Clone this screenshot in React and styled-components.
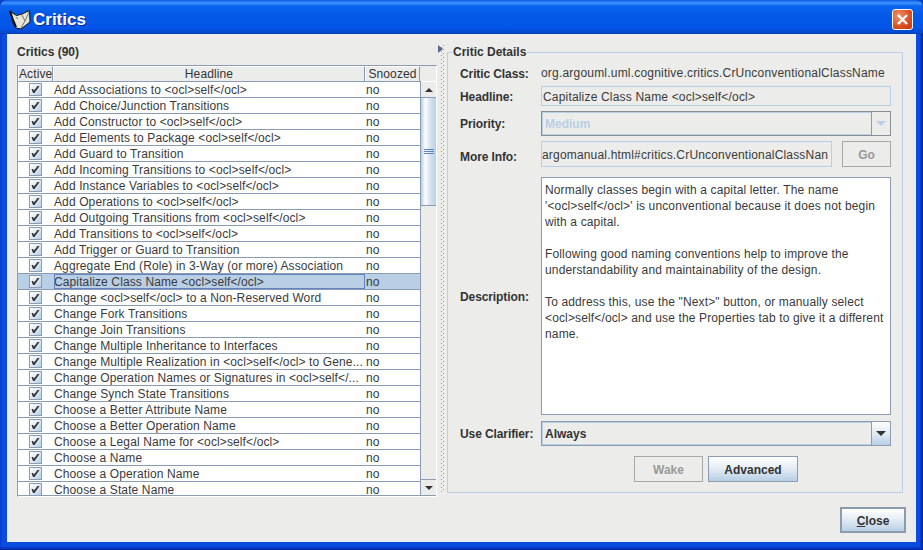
import React from 'react';
import styled, { createGlobalStyle } from 'styled-components';

const GlobalStyle = createGlobalStyle`
  html, body {
    margin: 0;
    padding: 0;
    background: #0a3cc4;
  }
  * {
    box-sizing: border-box;
  }
`;

const FONT = '"Liberation Sans", Arial, sans-serif';

const Frame = styled.div`
  width: 923px;
  height: 550px;
  display: flex;
  flex-direction: column;
  overflow: hidden;
  font-family: ${FONT};
  font-size: 12px;
  color: #333;
  background: #0a4ce0;
  box-shadow: inset -1px -1px 0 #00209c, inset -3px -3px 0 #0838c8, inset 2px 0 0 #0a40d0;
  border-radius: 7px 7px 0 0;
`;

const TitleBar = styled.div`
  height: 34px;
  flex: none;
  display: flex;
  align-items: center;
  padding: 5px 10px 0 9px;
  gap: 2px;
  background: linear-gradient(180deg, #0a5ae0 0, #3d95ff 3px, #0a64ee 6px, #0358e6 16px, #0454ea 28px, #0246c8 33px, #0238a8 34px);
`;

const Title = styled.span`
  color: #fff;
  font-size: 17px;
  font-weight: 700;
  text-shadow: 1px 1px 0 #0a2a90;
  flex: 1;
  padding-top: 1px;
`;

const CloseBox = styled.div`
  width: 21px;
  height: 21px;
  border: 1px solid #fff;
  border-radius: 3px;
  background: radial-gradient(circle at 30% 30%, #ee9070, #dc4e22 60%, #c43a12);
  display: flex;
  align-items: center;
  justify-content: center;
`;

const Client = styled.div`
  flex: 1;
  display: flex;
  flex-direction: column;
  margin: 0 7px 8px;
  background: #ecedeb;
  min-height: 0;
`;

const Body = styled.div`
  flex: 1;
  display: flex;
  min-height: 0;
  padding: 12px 13px 0 10px;
`;

const LeftPane = styled.div`
  width: 420px;
  flex: none;
  display: flex;
  flex-direction: column;
`;

const PaneLabel = styled.div`
  font-weight: 700;
  font-size: 12px;
  line-height: 13px;
  height: 19px;
  flex: none;
  color: #333;
`;

const TableBox = styled.div`
  width: 420px;
  height: 432px;
  flex: none;
  border: 1px solid #8b9bb0;
  border-right-color: #fff;
  border-bottom-color: #fff;
  box-shadow: inset -1px -1px 0 #8b9bb0;
  display: flex;
  overflow: hidden;
`;

const TableArea = styled.div`
  width: 403px;
  flex: none;
  display: flex;
  flex-direction: column;
  overflow: hidden;
  margin-bottom: 1px;
`;

const HeaderRow = styled.div`
  height: 16px;
  flex: none;
  display: grid;
  grid-template-columns: 35px 312px 55px;
  background: #ecedeb;
  border-bottom: 1px solid #8b9bb0;
`;

const HeaderCell = styled.div`
  border: 1px solid #fff;
  border-right-color: #8b9bb0;
  border-bottom: 0;
  text-align: center;
  line-height: 14px;
  font-size: 12px;
  color: #333;
  white-space: nowrap;
  letter-spacing: 0.12px;
`;

const Row = styled.div`
  height: 16px;
  flex: none;
  display: grid;
  grid-template-columns: 35px 312px 56px;
  background: ${({ $selected }) => ($selected ? '#b8cfe5' : '#fff')};
  border-bottom: 1px solid #8b9bb0;
  border-right: 1px solid #8b9bb0;
`;

const CheckCell = styled.div`
  display: flex;
  align-items: center;
  justify-content: center;
`;

const TextCell = styled.div`
  font-size: 12px;
  line-height: 16px;
  margin-left: 1px;
  color: #3a3a3a;
  white-space: nowrap;
  overflow: hidden;
  height: 15px;
  letter-spacing: 0.12px;
  outline: ${({ $focus }) => ($focus ? '1px solid #6382bf' : 'none')};
  outline-offset: -1px;
`;

const SnoozeCell = styled.div`
  font-size: 12px;
  line-height: 16px;
  padding-left: 1px;
  color: #3a3a3a;
  overflow: hidden;
  height: 15px;
`;

const CheckBoxBox = styled.div`
  width: 13px;
  height: 13px;
  border: 1px solid #8b9bb0;
  background: linear-gradient(135deg, #fff 0, #dfe8f3 50%, #b8cfe5 100%);
  display: flex;
  align-items: center;
  justify-content: center;
`;

const ScrollBar = styled.div`
  width: 15px;
  flex: none;
  display: flex;
  flex-direction: column;
  background: #ecedeb;
  margin-bottom: 1px;
  margin-right: 1px;
`;

const ScrollTopGap = styled.div`
  height: 16px;
  flex: none;
  background: #ecedeb;
  border-bottom: 1px solid #fff;
`;

const ScrollArrow = styled.div`
  height: 16px;
  flex: none;
  display: flex;
  align-items: center;
  justify-content: center;
  background: #ecedeb;
  border-bottom: ${({ $up }) => ($up ? '1px solid #8b9bb0' : '0')};
  border-top: ${({ $up }) => ($up ? '0' : '1px solid #8b9bb0')};
`;

const Thumb = styled.div`
  height: 108px;
  flex: none;
  background: linear-gradient(90deg, #b8cfe5 0, #fff 30%, #dce7f2 55%, #b8cfe5 100%);
  border-bottom: 1px solid #8b9bb0;
  display: flex;
  align-items: center;
  justify-content: center;
`;

const Grip = styled.div`
  width: 10px;
  height: 5px;
  border-top: 1px solid #6382bf;
  border-bottom: 1px solid #6382bf;
  position: relative;
  &::after {
    content: '';
    position: absolute;
    left: 0;
    right: 0;
    top: 1px;
    height: 1px;
    background: #6382bf;
  }
`;

const Track = styled.div`
  flex: 1;
  background: #ecedeb;
`;

const Splitter = styled.div`
  width: 10px;
  flex: none;
  height: 448px;
  margin-top: -1px;
  padding-left: 1px;
  background-image:
    radial-gradient(circle at 0.5px 0.5px, #9a9aa2 0.7px, transparent 0.8px),
    radial-gradient(circle at 0.5px 0.5px, #9a9aa2 0.7px, transparent 0.8px);
  background-size: 4px 4px, 4px 4px;
  background-repeat: repeat-y, repeat-y;
  background-position: 4px 14px, 6px 16px;
`;

const SplitArrow = styled.div`
  width: 0;
  height: 0;
  border-left: 5px solid #5a6a85;
  border-top: 4px solid transparent;
  border-bottom: 4px solid transparent;
`;

const Details = styled.fieldset`
  flex: 1;
  margin: 0;
  padding: 5px 12px 0 12px;
  height: 447px;
  border: 1px solid #b8cfe5;
  min-width: 0;
  display: flex;
  flex-direction: column;
`;

const Legend = styled.legend`
  font-weight: 700;
  font-size: 12px;
  padding: 0 1px;
  margin-left: -8px;
  color: #333;
  line-height: 13px;
`;

const Form = styled.div`
  display: grid;
  grid-template-columns: 81px 350px;
  grid-template-rows: 22px 25px 30px 36px 244px 25px;
`;

const Label = styled.div`
  font-weight: 700;
  font-size: 12px;
  height: ${({ $h }) => $h}px;
  display: flex;
  align-items: center;
  color: #333;
  letter-spacing: -0.1px;
`;

const ValueText = styled.div`
  font-size: 12px;
  line-height: 19px;
  color: #3a3a3a;
  white-space: nowrap;
  letter-spacing: 0.2px;
`;

const Input = styled.div`
  border: 1px solid #b8cfe5;
  background: #ecedeb;
  font-size: 12px;
  line-height: ${({ $h }) => $h}px;
  padding-left: ${({ $pad }) => $pad}px;
  letter-spacing: 0.18px;
  color: #3a3a3a;
  white-space: nowrap;
  overflow: hidden;
  height: ${({ $h }) => $h}px;
  flex: ${({ $grow }) => ($grow ? '1' : 'none')};
`;

const InfoRow = styled.div`
  display: flex;
  gap: 10px;
  height: 26px;
`;

const Combo = styled.div`
  display: flex;
  height: 25px;
  border: 1px solid ${({ $off }) => ($off ? '#8a8f96' : '#8b9bb0')};
  background: #ecedeb;
`;

const ComboText = styled.div`
  flex: 1;
  font-weight: 700;
  font-size: 12px;
  line-height: 23px;
  padding-left: 2px;
  color: ${({ $off }) => ($off ? '#b8cfe5' : '#333')};
  border: 1px solid #b8cfe5;
  border-width: 1px 0 1px 1px;
`;

const ComboButton = styled.div`
  width: 19px;
  flex: none;
  border-left: 1px solid #8b9bb0;
  display: flex;
  align-items: center;
  justify-content: center;
  background: ${({ $off }) => ($off ? '#ecedeb' : 'linear-gradient(180deg, #fff 0, #dfe8f3 55%, #b8cfe5 100%)')};
`;

const Arrow = styled.div`
  width: 0;
  height: 0;
  border-left: ${({ $w }) => $w}px solid transparent;
  border-right: ${({ $w }) => $w}px solid transparent;
  border-${({ $up }) => ($up ? 'bottom' : 'top')}: ${({ $hh }) => $hh}px solid ${({ $color }) => $color};
`;

const Button = styled.button`
  font-family: ${FONT};
  font-size: 12px;
  font-weight: 700;
  padding: 1px 0 0;
  width: ${({ $w }) => $w}px;
  height: 26px;
  flex: none;
  color: ${({ disabled }) => (disabled ? '#999' : '#333')};
  border: ${({ $thick }) => ($thick ? 2 : 1)}px solid ${({ disabled }) => (disabled ? '#a8a8a8' : '#8b9bb0')};
  background: ${({ disabled }) => (disabled ? '#ecedeb' : 'linear-gradient(180deg, #fff 0, #e6edf5 45%, #b8cfe5 100%)')};
`;

const Description = styled.div`
  border: 1px solid #8b9bb0;
  background: #fff;
  padding: 4px 3px;
  font-size: 12px;
  line-height: 16px;
  letter-spacing: 0.14px;
  color: #3a3a3a;
  height: 238px;
  white-space: pre-line;
`;

const ButtonRow = styled.div`
  display: flex;
  gap: 5px;
  margin-top: 10px;
  padding-left: 174px;
`;

const Footer = styled.div`
  height: 45px;
  flex: none;
  display: flex;
  justify-content: flex-end;
  align-items: flex-start;
  padding: 10px 10px 0 0;
`;

const CRITICS = [
  'Add Associations to <ocl>self</ocl>',
  'Add Choice/Junction Transitions',
  'Add Constructor to <ocl>self</ocl>',
  'Add Elements to Package <ocl>self</ocl>',
  'Add Guard to Transition',
  'Add Incoming Transitions to <ocl>self</ocl>',
  'Add Instance Variables to <ocl>self</ocl>',
  'Add Operations to <ocl>self</ocl>',
  'Add Outgoing Transitions from <ocl>self</ocl>',
  'Add Transitions to <ocl>self</ocl>',
  'Add Trigger or Guard to Transition',
  'Aggregate End (Role) in 3-Way (or more) Association',
  'Capitalize Class Name <ocl>self</ocl>',
  'Change <ocl>self</ocl> to a Non-Reserved Word',
  'Change Fork Transitions',
  'Change Join Transitions',
  'Change Multiple Inheritance to Interfaces',
  'Change Multiple Realization in <ocl>self</ocl> to Gene...',
  'Change Operation Names or Signatures in <ocl>self</...',
  'Change Synch State Transitions',
  'Choose a Better Attribute Name',
  'Choose a Better Operation Name',
  'Choose a Legal Name for <ocl>self</ocl>',
  'Choose a Name',
  'Choose a Operation Name',
  'Choose a State Name',
];

const DESCRIPTION = `Normally classes begin with a capital letter. The name
'<ocl>self</ocl>' is unconventional because it does not begin
with a capital.

Following good naming conventions help to improve the
understandability and maintainability of the design.

To address this, use the "Next>" button, or manually select
<ocl>self</ocl> and use the Properties tab to give it a different
name.`;

const Logo = () => (
  <svg width="22" height="20" viewBox="0 0 22 20">
    <path d="M0.5 1 L7.5 5.5 L13 4 L20.5 0.5 L21 12 L12 19 L7 18 L3.5 12 L3 7 Z" fill="#e6e5da" stroke="#111" strokeWidth="1" />
    <path d="M1 1 L4 10 L7 17" fill="none" stroke="#111" strokeWidth="2" />
    <path d="M13 5 L16 11 L12 18 M20 2 L16 11 M7 7 L9 9" fill="none" stroke="#77766c" strokeWidth="1" />
  </svg>
);

const CloseIcon = () => (
  <svg width="13" height="13" viewBox="0 0 13 13">
    <path d="M2 2 L11 11 M11 2 L2 11" stroke="#fff" strokeWidth="2.4" />
  </svg>
);

const Tick = () => (
  <svg width="9" height="9" viewBox="0 0 9 9">
    <path d="M0.5 4 L2 4 L3 5.5 L6.5 1 L8.5 1 L3.5 8 L2 8 Z" fill="#333" />
  </svg>
);

const App = () => (
  <>
    <GlobalStyle />
    <Frame>
      <TitleBar>
        <Logo />
        <Title>Critics</Title>
        <CloseBox><CloseIcon /></CloseBox>
      </TitleBar>
      <Client>
        <Body>
          <LeftPane>
            <PaneLabel>Critics (90)</PaneLabel>
            <TableBox>
              <TableArea>
                <HeaderRow>
                  <HeaderCell>Active</HeaderCell>
                  <HeaderCell>Headline</HeaderCell>
                  <HeaderCell>Snoozed</HeaderCell>
                </HeaderRow>
                {CRITICS.map((name, i) => (
                  <Row key={name} $selected={i === 12}>
                    <CheckCell><CheckBoxBox><Tick /></CheckBoxBox></CheckCell>
                    <TextCell $focus={i === 12}>{name}</TextCell>
                    <SnoozeCell>no</SnoozeCell>
                  </Row>
                ))}
              </TableArea>
              <ScrollBar>
                <ScrollTopGap />
                <ScrollArrow $up><Arrow $up $w={4} $hh={4} $color="#333" /></ScrollArrow>
                <Thumb><Grip /></Thumb>
                <Track />
                <ScrollArrow><Arrow $w={4} $hh={4} $color="#333" /></ScrollArrow>
              </ScrollBar>
            </TableBox>
          </LeftPane>
          <Splitter><SplitArrow /></Splitter>
          <Details>
            <Legend>Critic Details</Legend>
            <Form>
              <Label $h={19}>Critic Class:</Label>
              <ValueText>org.argouml.uml.cognitive.critics.CrUnconventionalClassName</ValueText>
              <Label $h={22}>Headline:</Label>
              <Input $h={20} $pad={1}>Capitalize Class Name &lt;ocl&gt;self&lt;/ocl&gt;</Input>
              <Label $h={25}>Priority:</Label>
              <Combo $off>
                <ComboText $off>Medium</ComboText>
                <ComboButton $off><Arrow $w={5} $hh={5} $color="#b8cfe5" /></ComboButton>
              </Combo>
              <Label $h={32}>More Info:</Label>
              <InfoRow>
                <Input $h={26} $pad={0} $grow>argomanual.html#critics.CrUnconventionalClassNan</Input>
                <Button disabled $w={49}>Go</Button>
              </InfoRow>
              <Label $h={240}>Description:</Label>
              <Description>{DESCRIPTION}</Description>
              <Label $h={25}>Use Clarifier:</Label>
              <Combo>
                <ComboText>Always</ComboText>
                <ComboButton><Arrow $w={5} $hh={5} $color="#333" /></ComboButton>
              </Combo>
            </Form>
            <ButtonRow>
              <Button disabled $w={69}>Wake</Button>
              <Button $w={90}>Advanced</Button>
            </ButtonRow>
          </Details>
        </Body>
        <Footer>
          <Button $w={66} $thick><u>C</u>lose</Button>
        </Footer>
      </Client>
    </Frame>
  </>
);

export default App;
